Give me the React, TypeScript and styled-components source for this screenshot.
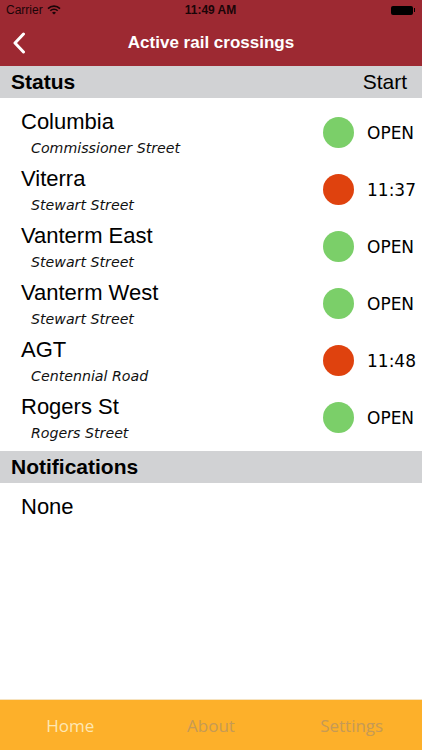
import styled, { createGlobalStyle } from "styled-components";

const GlobalStyle = createGlobalStyle`
    html, body {
        margin: 0;
        padding: 0;
        background: #ffffff;
    }
    #root {
        height: 750px;
    }
`;

const Screen = styled.div`
    height: 750px;
    display: flex;
    flex-direction: column;
    font-family: "Liberation Sans", Arial, sans-serif;
    color: #000;
    overflow: hidden;
`;

const TopBar = styled.header`
    background-color: #9d2932;
    color: #fff;
`;

const StatusBar = styled.div`
    height: 20px;
    display: grid;
    grid-template-columns: 1fr auto 1fr;
    align-items: center;
    padding: 0 7px 0 6px;
    font-size: 12px;
    color: #1a0508;
`;

const Carrier = styled.div`
    display: flex;
    align-items: center;
    gap: 4px;
`;

const Clock = styled.div`
    font-weight: 700;
`;

const Battery = styled.div`
    justify-self: end;
    display: flex;
    align-items: center;
    gap: 1px;
`;

const BatteryBody = styled.span`
    width: 22px;
    height: 9px;
    border-radius: 2px;
    background: #000;
`;

const BatteryTip = styled.span`
    width: 1.5px;
    height: 4px;
    background: #000;
`;

const NavBar = styled.div`
    height: 46px;
    display: grid;
    grid-template-columns: 60px 1fr 60px;
    align-items: center;
`;

const BackButton = styled.div`
    padding-left: 12px;
    display: flex;
    align-items: center;
`;

const NavTitle = styled.h1`
    margin: 0;
    text-align: center;
    font-size: 17px;
    font-weight: 700;
    color: #fff;
`;

const SectionHeader = styled.div<{ $gap?: number }>`
    height: 32px;
    margin-top: ${(props) => props.$gap ?? 0}px;
    padding: 0 15px 0 11px;
    background-color: #d1d2d4;
    display: flex;
    align-items: center;
    justify-content: space-between;
    font-size: 21px;
`;

const SectionTitle = styled.span`
    font-weight: 700;
`;

const Content = styled.main`
    flex: 1;
`;

const Row = styled.div`
    height: 57px;
    display: flex;
    justify-content: space-between;
    padding-left: 21px;
`;

const Names = styled.div`
    padding-top: 12px;
`;

const Place = styled.div`
    font-size: 22px;
    line-height: 24px;
`;

const Street = styled.div`
    margin-top: 5px;
    padding-left: 10px;
    font-family: "DejaVu Sans", Verdana, sans-serif;
    font-style: italic;
    font-size: 14.2px;
    line-height: 18px;
    color: #111;
`;

const StateBox = styled.div`
    margin-top: 19px;
    align-self: flex-start;
    display: flex;
    align-items: center;
    gap: 13px;
`;

const Light = styled.span<{ $open: boolean }>`
    width: 31px;
    height: 31px;
    border-radius: 50%;
    background-color: ${(props) => (props.$open ? "#7bcf69" : "#df420e")};
`;

const StateText = styled.span`
    width: 55px;
    font-family: "DejaVu Sans", Verdana, sans-serif;
    font-size: 17px;
    line-height: 20px;
`;

const Note = styled.div`
    padding: 12px 21px;
    font-size: 22px;
    line-height: 24px;
`;

const TabBar = styled.nav`
    height: 50px;
    background-color: #fdb02a;
    border-top: 1px solid #f6e3c0;
    display: grid;
    grid-template-columns: repeat(3, 1fr);
    align-items: center;
    font-family: "Open Sans", "Noto Sans", sans-serif;
    font-size: 17px;
`;

const Tab = styled.div<{ $active?: boolean }>`
    text-align: center;
    color: ${(props) => (props.$active ? "#fde7b4" : "#c69a55")};
`;

const crossings = [
    { name: "Columbia", street: "Commissioner Street", open: true, time: "" },
    { name: "Viterra", street: "Stewart Street", open: false, time: "11:37" },
    { name: "Vanterm East", street: "Stewart Street", open: true, time: "" },
    { name: "Vanterm West", street: "Stewart Street", open: true, time: "" },
    { name: "AGT", street: "Centennial Road", open: false, time: "11:48" },
    { name: "Rogers St", street: "Rogers Street", open: true, time: "" },
];

function Wifi() {
    return (
        <svg width="14" height="10" viewBox="0 0 14 10">
            <path d="M1 3.6 A8.5 8.5 0 0 1 13 3.6" stroke="#1a0508" strokeWidth="1.6" fill="none" />
            <path d="M3.3 5.8 A5.3 5.3 0 0 1 10.7 5.8" stroke="#1a0508" strokeWidth="1.6" fill="none" />
            <path d="M7 9.6 L5 7.7 A2.8 2.8 0 0 1 9 7.7 Z" fill="#1a0508" />
        </svg>
    );
}

function Chevron() {
    return (
        <svg width="14" height="22" viewBox="0 0 14 22">
            <path d="M11.5 2 L3 11 L11.5 20" stroke="#fff" strokeWidth="3" fill="none" strokeLinecap="round" strokeLinejoin="round" />
        </svg>
    );
}

export default function App() {
    return (
        <Screen>
            <GlobalStyle />
            <TopBar>
                <StatusBar>
                    <Carrier>
                        Carrier <Wifi />
                    </Carrier>
                    <Clock>11:49 AM</Clock>
                    <Battery>
                        <BatteryBody />
                        <BatteryTip />
                    </Battery>
                </StatusBar>
                <NavBar>
                    <BackButton>
                        <Chevron />
                    </BackButton>
                    <NavTitle>Active rail crossings</NavTitle>
                    <div />
                </NavBar>
            </TopBar>
            <Content>
                <SectionHeader>
                    <SectionTitle>Status</SectionTitle>
                    <span>Start</span>
                </SectionHeader>
                {crossings.map((c) => (
                    <Row key={c.name}>
                        <Names>
                            <Place>{c.name}</Place>
                            <Street>{c.street}</Street>
                        </Names>
                        <StateBox>
                            <Light $open={c.open} />
                            <StateText>{c.open ? "OPEN" : c.time}</StateText>
                        </StateBox>
                    </Row>
                ))}
                <SectionHeader $gap={11}>
                    <SectionTitle>Notifications</SectionTitle>
                </SectionHeader>
                <Note>None</Note>
            </Content>
            <TabBar>
                <Tab $active>Home</Tab>
                <Tab>About</Tab>
                <Tab>Settings</Tab>
            </TabBar>
        </Screen>
    );
}
